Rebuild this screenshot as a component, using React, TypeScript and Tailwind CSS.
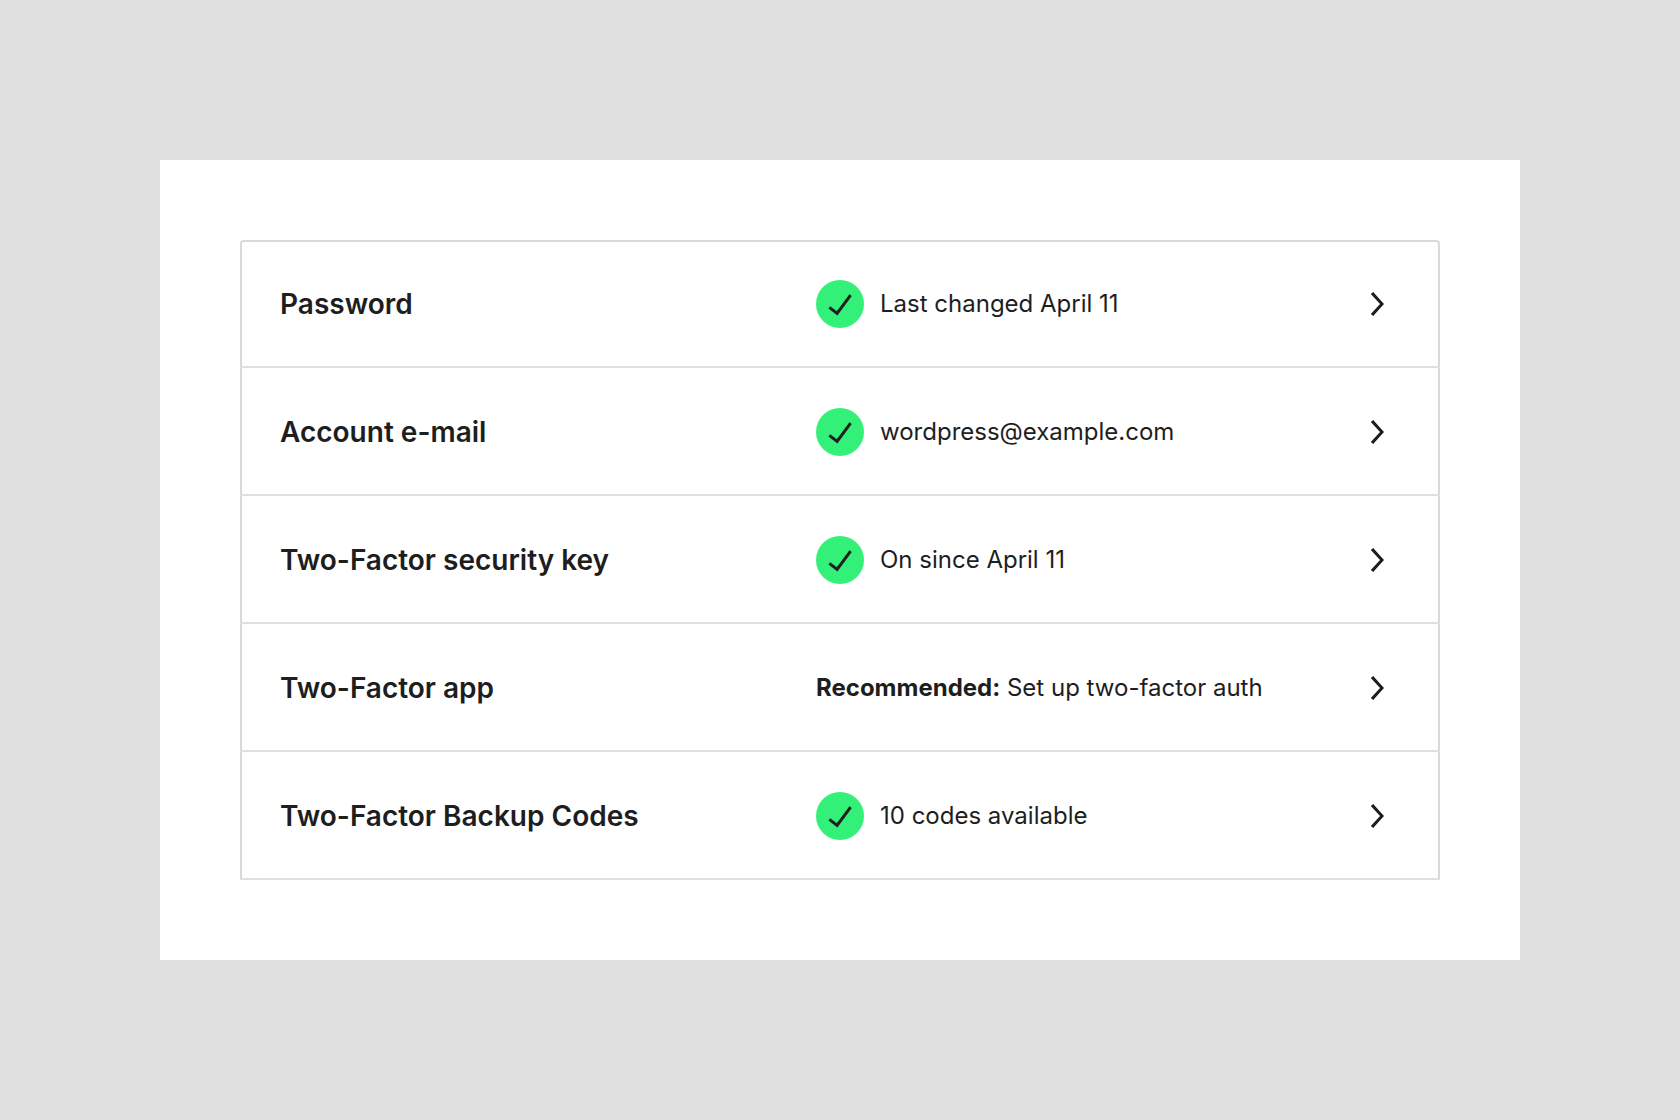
import type { FC, ReactNode } from 'react';

interface SecurityItem {
  title: string;
  status: ReactNode;
  done: boolean;
}

const items: SecurityItem[] = [
  { title: 'Password', status: 'Last changed April 11', done: true },
  { title: 'Account e-mail', status: 'wordpress@example.com', done: true },
  { title: 'Two-Factor security key', status: 'On since April 11', done: true },
  {
    title: 'Two-Factor app',
    status: (
      <>
        <strong className="font-bold">Recommended:</strong> Set up two-factor auth
      </>
    ),
    done: false,
  },
  { title: 'Two-Factor Backup Codes', status: '10 codes available', done: true },
];

const CheckBadge: FC = () => (
  <span className="size-12 shrink-0 rounded-full bg-[#33f078]">
    <svg viewBox="0 0 24 24" className="size-12" fill="currentColor" aria-hidden="true">
      <path d="M16.7 7.1l-6.3 8.5-3.3-2.5-.9 1.2 4.5 3.4L17.9 8z" />
    </svg>
  </span>
);

const ChevronRight: FC = () => (
  <svg
    viewBox="0 0 24 24"
    className="size-12 shrink-0"
    fill="currentColor"
    aria-hidden="true"
  >
    <path d="M10.6 6L9.4 7l4.6 5-4.6 5 1.2 1 5.4-6z" />
  </svg>
);

const SecurityRow: FC<{ item: SecurityItem }> = ({ item }) => (
  <li className="group -mx-0.5 border-b-2 border-[#e0e0e0]">
    <a
      href="#"
      className="flex items-center px-10 pt-10 pb-[38px] group-first:pt-[38px]"
    >
      <span className="flex-1 text-[28px] leading-8 font-semibold">{item.title}</span>
      <span className="flex flex-1 items-center gap-4 text-2xl">
        {item.done && <CheckBadge />}
        <span>{item.status}</span>
      </span>
      <ChevronRight />
    </a>
  </li>
);

export default function App() {
  return (
    <main className="flex min-h-screen items-center bg-[#e0e0e0] px-40 py-10 font-['Inter',sans-serif] text-[#1e1e1e]">
      <section className="w-full bg-white p-20">
        <ul className="rounded-t-sm border-2 border-b-0 border-[#d9d9d9]">
          {items.map((item) => (
            <SecurityRow key={item.title} item={item} />
          ))}
        </ul>
      </section>
    </main>
  );
}
